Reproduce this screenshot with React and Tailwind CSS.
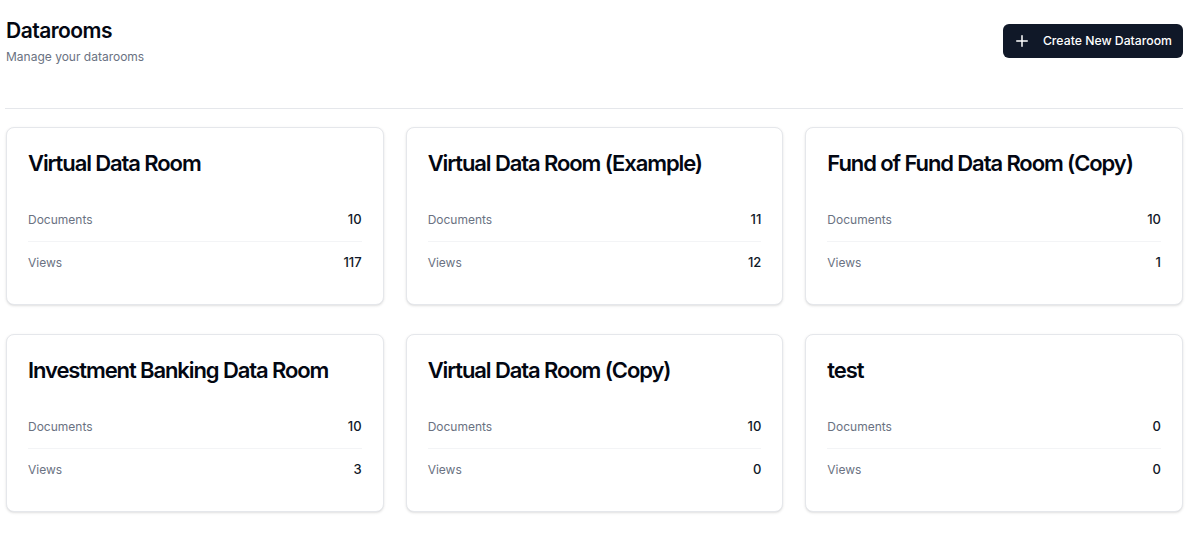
import React from 'react';

const rooms = [
  { name: 'Virtual Data Room', documents: 10, views: 117 },
  { name: 'Virtual Data Room (Example)', documents: 11, views: 12 },
  { name: 'Fund of Fund Data Room (Copy)', documents: 10, views: 1 },
  { name: 'Investment Banking Data Room', documents: 10, views: 3 },
  { name: 'Virtual Data Room (Copy)', documents: 10, views: 0 },
  { name: 'test', documents: 0, views: 0 },
];

function PlusIcon() {
  return (
    <svg width="18" height="18" viewBox="0 0 24 24" fill="none" stroke="currentColor" strokeWidth="2" strokeLinecap="round" strokeLinejoin="round">
      <path d="M5 12h14" />
      <path d="M12 5v14" />
    </svg>
  );
}

function DataroomCard({ room }) {
  return (
    <div className="rounded-lg border border-gray-200 bg-white px-[21px] pt-[20px] pb-[33px] shadow-sm">
      <h2 className="text-[22px] leading-[30px] font-semibold tracking-tighter text-gray-950">{room.name}</h2>
      <div className="mt-[34px]">
        <div className="flex h-[16px] items-center justify-between text-[12px]">
          <span className="text-gray-500">Documents</span>
          <span className="text-[13px] font-medium text-gray-900">{room.documents}</span>
        </div>
        <div className="mt-[13px] border-t border-gray-100" />
        <div className="mt-[13px] flex h-[16px] items-center justify-between text-[12px]">
          <span className="text-gray-500">Views</span>
          <span className="text-[13px] font-medium text-gray-900">{room.views}</span>
        </div>
      </div>
    </div>
  );
}

export default function App() {
  return (
    <div className="min-h-screen bg-white pl-[6px] pr-[17px] pt-[17px]" style={{ fontFamily: 'Inter, "Noto Sans", sans-serif' }}>
      <div className="flex items-start justify-between">
        <div>
          <h1 className="text-[21px] leading-[28px] font-semibold tracking-tight text-gray-950">Datarooms</h1>
          <p className="mt-[4px] text-[12px] leading-[16px] text-gray-500">Manage your datarooms</p>
        </div>
        <button className="mt-[7px] flex h-[34px] items-center gap-[12px] rounded-md bg-gray-900 pl-[10px] pr-[11px] text-[12.25px] font-medium text-white">
          <PlusIcon />
          Create New Dataroom
        </button>
      </div>
      <div className="-ml-[1px] mt-[43px] border-t border-gray-200" />
      <div className="mt-[18px] grid grid-cols-3 gap-x-[22px] gap-y-[29px]">
        {rooms.map((room) => (
          <DataroomCard key={room.name} room={room} />
        ))}
      </div>
    </div>
  );
}
